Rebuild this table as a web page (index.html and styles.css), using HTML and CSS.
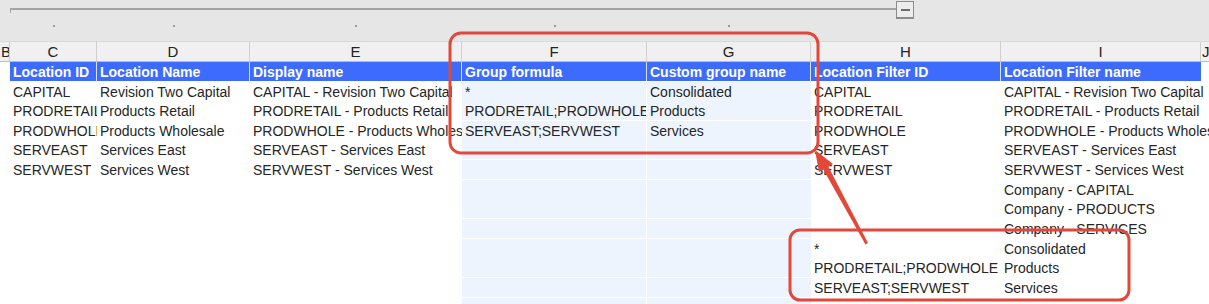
FILE: index.html
```html
<!DOCTYPE html>
<html lang="en">
<head>
<meta charset="UTF-8">
<meta name="viewport" content="width=device-width, initial-scale=1.0">
<title>Location groups</title>
<link rel="stylesheet" href="styles.css">
</head>
<body>
<div class="outline">
  <div class="outline-bar">
    <div class="bracket"></div>
    <div class="collapse"><span></span></div>
  </div>
  <div class="outline-dots row">
    <div></div><div><i></i></div><div><i></i></div><div><i></i></div><div><i></i></div><div><i></i></div><div></div><div></div><div></div>
  </div>
</div>

<div class="sheet">
  <div class="row letters">
    <div class="cut">B</div><div>C</div><div>D</div><div>E</div><div>F</div><div>G</div><div>H</div><div>I</div><div class="cut">J</div>
  </div>
  <div class="row head">
    <div></div><div>Location ID</div><div>Location Name</div><div>Display name</div><div>Group formula</div><div>Custom group name</div><div>Location Filter ID</div><div>Location Filter name</div><div></div>
  </div>
  <div class="row">
    <div></div><div>CAPITAL</div><div>Revision Two Capital</div><div>CAPITAL - Revision Two Capital</div><div class="grp">*</div><div class="grp">Consolidated</div><div>CAPITAL</div><div class="spill">CAPITAL - Revision Two Capital</div><div></div>
  </div>
  <div class="row">
    <div></div><div>PRODRETAIL</div><div>Products Retail</div><div>PRODRETAIL - Products Retail</div><div class="grp">PRODRETAIL;PRODWHOLE</div><div class="grp">Products</div><div>PRODRETAIL</div><div class="spill">PRODRETAIL - Products Retail</div><div></div>
  </div>
  <div class="row">
    <div></div><div>PRODWHOLE</div><div>Products Wholesale</div><div>PRODWHOLE - Products Wholesale</div><div class="grp">SERVEAST;SERVWEST</div><div class="grp">Services</div><div>PRODWHOLE</div><div class="spill">PRODWHOLE - Products Wholesale</div><div></div>
  </div>
  <div class="row">
    <div></div><div>SERVEAST</div><div>Services East</div><div>SERVEAST - Services East</div><div class="grp"></div><div class="grp"></div><div>SERVEAST</div><div class="spill">SERVEAST - Services East</div><div></div>
  </div>
  <div class="row">
    <div></div><div>SERVWEST</div><div>Services West</div><div>SERVWEST - Services West</div><div class="grp"></div><div class="grp"></div><div>SERVWEST</div><div class="spill">SERVWEST - Services West</div><div></div>
  </div>
  <div class="row">
    <div></div><div></div><div></div><div></div><div class="grp"></div><div class="grp"></div><div></div><div class="spill">Company - CAPITAL</div><div></div>
  </div>
  <div class="row">
    <div></div><div></div><div></div><div></div><div class="grp"></div><div class="grp"></div><div></div><div class="spill">Company - PRODUCTS</div><div></div>
  </div>
  <div class="row">
    <div></div><div></div><div></div><div></div><div class="grp"></div><div class="grp"></div><div></div><div class="spill">Company - SERVICES</div><div></div>
  </div>
  <div class="row">
    <div></div><div></div><div></div><div></div><div class="grp"></div><div class="grp"></div><div>*</div><div class="spill">Consolidated</div><div></div>
  </div>
  <div class="row">
    <div></div><div></div><div></div><div></div><div class="grp"></div><div class="grp"></div><div>PRODRETAIL;PRODWHOLE</div><div class="spill">Products</div><div></div>
  </div>
  <div class="row">
    <div></div><div></div><div></div><div></div><div class="grp"></div><div class="grp"></div><div>SERVEAST;SERVWEST</div><div class="spill">Services</div><div></div>
  </div>
  <div class="row">
    <div></div><div></div><div></div><div></div><div class="grp"></div><div class="grp"></div><div></div><div></div><div></div>
  </div>

  <!-- callouts drawn over the grid -->
  <svg class="marks" width="1209" height="304" viewBox="0 0 1209 304">
    <rect x="450" y="33" width="368" height="120" rx="11" fill="none" stroke="#e2483a" stroke-width="3"/>
    <rect x="790" y="230" width="339" height="70" rx="10" fill="none" stroke="#e2483a" stroke-width="3"/>
    <polygon points="868,243 865.5,244.5 823,169 828,166" fill="#e2483a"/>
    <polygon points="815,150 833,164 819,172" fill="#e2483a"/>
  </svg>
</div>
</body>
</html>
```

FILE: styles.css
```css
body {
  margin: 0;
  background: #fff;
  font-family: "Liberation Sans", Arial, sans-serif;
  color: #262626;
  overflow: hidden;
}

.row {
  display: grid;
  grid-template-columns: 10px 87px 153px 212px 185px 164px 190px 200px 1fr;
  height: 19.65px;
}

.row > div {
  white-space: nowrap;
  overflow: hidden;
  padding: 1px 0 0 3px;
  box-sizing: border-box;
  font-size: 14px;
  line-height: 19px;
}

.row > .spill {
  overflow: visible;
}

/* outline area above the column letters */
.outline {
  background: #e6e6e6;
  height: 41px;
}

.outline-bar {
  display: flex;
  align-items: flex-start;
  padding: 1px 0 0 10px;
  height: 19px;
}

.bracket {
  width: 886px;
  height: 5px;
  margin-top: 7px;
  border-top: 2px solid #a3a3a3;
  border-left: 1px solid #a3a3a3;
  box-sizing: border-box;
}

.collapse {
  width: 18px;
  height: 18px;
  box-sizing: border-box;
  border: 1px solid #8c8c8c;
  border-bottom-width: 2px;
  background: #ededed;
  display: flex;
  align-items: center;
  justify-content: center;
}

.collapse span {
  width: 9px;
  height: 2px;
  background: #6e6e6e;
}

.outline-dots {
  height: 12px;
  margin-top: 1px;
}

.outline-dots > div {
  display: flex;
  justify-content: center;
  padding: 0;
}

.outline-dots i {
  width: 2px;
  height: 2px;
  margin-top: 4px;
  background: #9a9a9a;
}

/* column letters */
.letters {
  height: 20.5px;
  background: #f0f0f0;
  border-top: 1px solid #d9d9d9;
  box-sizing: border-box;
}

.letters > div {
  padding: 0;
  text-align: center;
  line-height: 20px;
  font-size: 15px;
  color: #222;
  border-right: 1px solid #cfcfcf;
  border-bottom: 1px solid #bdbdbd;
}

.letters > .cut {
  text-align: left;
  padding-left: 1px;
}

.letters > div:last-child {
  border-right: none;
}

/* table header row */
.head {
  height: 20px;
}

.head > div {
  background: #3d6bfd;
  color: #fff;
  font-weight: bold;
  border-right: 1px solid #d8e2ff;
  line-height: 19px;
  border-bottom: 1px solid #fff;
}

.head > div:first-child,
.head > div:last-child {
  background: #fff;
  border-right: none;
}

.head > div:nth-child(8) {
  border-right: none;
}

.grp {
  background: #edf4fd;
  border-bottom: 1px solid #fff;
}

.row > .grp:nth-child(5) {
  border-right: 1px solid #fff;
}

.sheet {
  position: relative;
}

.marks {
  position: absolute;
  top: -41px;
  left: 0;
  pointer-events: none;
}
```
